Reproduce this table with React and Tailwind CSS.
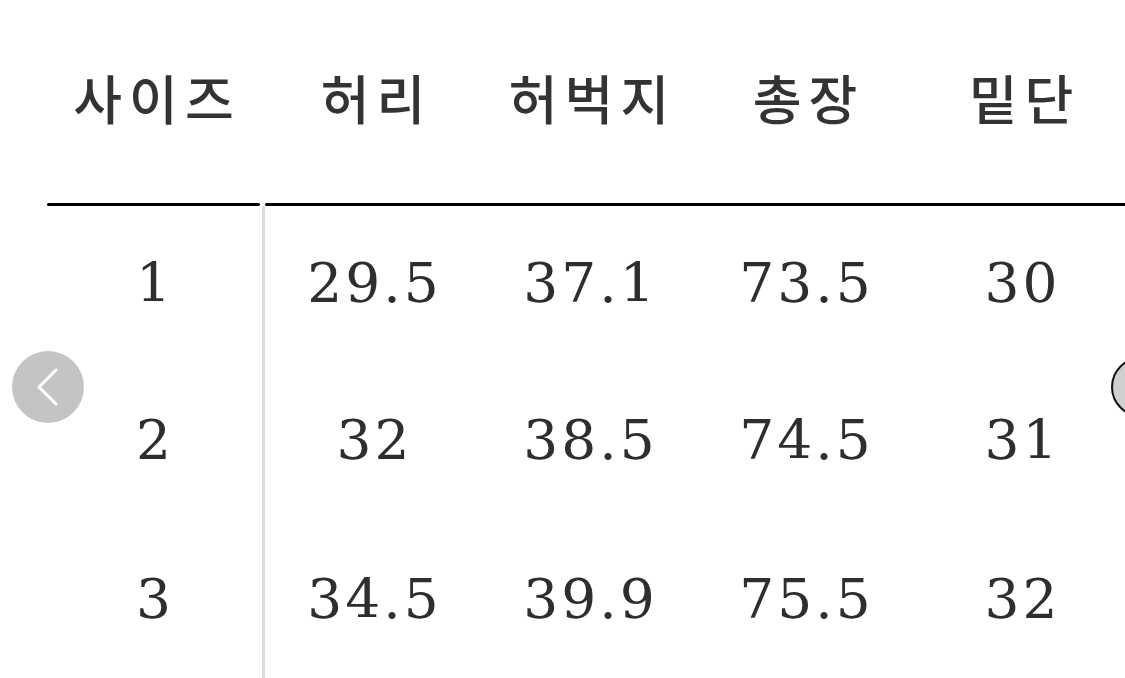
import React from "react";

const headers = ["사이즈", "허리", "허벅지", "총장", "밑단"];

const rows = [
  ["1", "29.5", "37.1", "73.5", "30"],
  ["2", "32", "38.5", "74.5", "31"],
  ["3", "34.5", "39.9", "75.5", "32"],
];

const App = () => {
  return (
    <div className="relative w-[1125px] h-[678px] overflow-hidden bg-white">
      <div className="pl-[47px]">
        <div className="grid grid-cols-[213px_5px_216px_216px_216px_216px] w-[1082px]">
          {/* header */}
          {headers.map((h, i) => (
            <React.Fragment key={h}>
              <div className="h-[203px] flex items-center justify-center pb-[8px]">
                <span
                  className="text-[53px] font-medium tracking-[7px] text-[#333] leading-none"
                  style={{ fontFamily: '"Noto Sans CJK KR", "Noto Sans", sans-serif', marginRight: "-7px" }}
                >
                  {h}
                </span>
              </div>
              {i === 0 && <div />}
            </React.Fragment>
          ))}

          {/* rule */}
          <div className="h-[3px] bg-black rounded-full" />
          <div />
          <div className="col-span-4 h-[3px] bg-black rounded-l-full" />

          {/* body */}
          {rows.map((r, ri) => (
            <React.Fragment key={ri}>
              {r.map((v, i) => (
                <React.Fragment key={i}>
                  <div className={`flex items-center justify-center ${ri === 0 ? "h-[155px]" : "h-[159px]"}`}>
                    <span
                      className="text-[55px] tracking-[3px] text-[#2e2e2e] leading-none"
                      style={{ fontFamily: '"DejaVu Serif", "Liberation Serif", serif', marginRight: "-3px" }}
                    >
                      {v}
                    </span>
                  </div>
                  {i === 0 && (
                    <div className="flex justify-end">
                      <div className="w-[3px] bg-[#dddddd]" />
                    </div>
                  )}
                </React.Fragment>
              ))}
            </React.Fragment>
          ))}
        </div>
      </div>

      {/* prev button */}
      <button className="absolute left-[12px] top-[351px] w-[72px] h-[72px] rounded-full bg-[#c4c4c4] flex items-center justify-center">
        <svg width="26" height="40" viewBox="0 0 26 40" fill="none">
          <path d="M21 3 L4 20 L21 37" stroke="white" strokeWidth="3" strokeLinecap="round" strokeLinejoin="round" />
        </svg>
      </button>

      {/* next button (cut off) */}
      <div className="absolute left-[1111px] top-[357px] w-[60px] h-[60px] rounded-full bg-[#cfcfcf] border-[2px] border-[#111]" />
    </div>
  );
};

export default App;
